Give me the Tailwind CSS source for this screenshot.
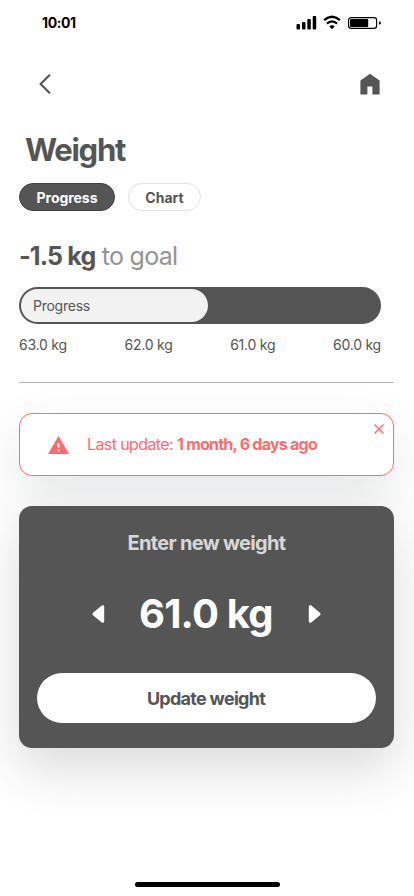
<!DOCTYPE html>
<html lang="en">
<head>
<meta charset="utf-8">
<meta name="viewport" content="width=device-width, initial-scale=1">
<title>Weight</title>
<script src="https://cdn.jsdelivr.net/npm/@tailwindcss/browser@4"></script>
</head>
<body class="bg-white">
<div class="w-[414px] h-[896px] overflow-hidden flex flex-col bg-white font-[Inter,sans-serif] text-[#555555]">
  <!-- Status bar -->
  <header class="h-[46px] shrink-0 flex items-center justify-between pl-[42px] pr-[33px] text-black">
    <span class="text-[14px] leading-5 font-bold tracking-[-0.4px]">10:01</span>
    <svg class="w-[86px] h-[16px]" viewBox="0 0 86 16" fill="none">
      <g fill="#000">
        <rect x="1.5" y="9" width="3.5" height="5.5" rx="1"/>
        <rect x="7" y="7" width="3.5" height="7.5" rx="1"/>
        <rect x="12.3" y="4" width="3.5" height="10.5" rx="1"/>
        <rect x="17.7" y="1" width="3.5" height="13.5" rx="1"/>
      </g>
      <path d="M29 5.2Q37 -1.6 45 5.2" stroke="#000" stroke-width="2.3"/>
      <path d="M31.9 8.6Q37 4.2 42.1 8.6" stroke="#000" stroke-width="2.2"/>
      <path d="M37 14.2L34.2 11.3Q37 9.1 39.8 11.3Z" fill="#000"/>
      <rect x="53.6" y="2.6" width="28" height="10.8" rx="2.6" stroke="#000" stroke-width="1.2"/>
      <rect x="55" y="4" width="18.2" height="8" rx="1" fill="#000"/>
      <path d="M84 6.2Q86 6.8 86 8T84 9.8Z" fill="#000"/>
    </svg>
  </header>

  <!-- Navigation -->
  <nav class="h-[76px] shrink-0 flex items-center justify-between pl-[37px] pr-[34px]">
    <svg class="w-[16px] h-[22px]" viewBox="0 0 16 22" fill="none"><path d="M12.4 2.3L3.6 11L12.4 19.7" stroke="#555" stroke-width="2.2" stroke-linecap="round" stroke-linejoin="round"/></svg>
    <svg class="w-[20px] h-[22px]" viewBox="0 0 20 22"><path d="M10 .8L.8 7.2Q.4 7.5 .4 8V21.2Q.4 21.6 .8 21.6H7.4V13.6H12.4V21.6H19.2Q19.6 21.6 19.6 21.2V8Q19.6 7.5 19.2 7.2Z" fill="#555"/></svg>
  </nav>

  <main class="pl-[19px] pr-[20px]">
    <h1 class="h-[61px] pt-[9px] pl-[6px] text-[31px] leading-[37px] font-bold tracking-[-1.3px]">Weight</h1>

    <div class="flex gap-[13px]">
      <button class="w-[96px] h-[28px] rounded-full bg-[#555555] border border-[#404040] text-white text-[14px] leading-5 font-bold tracking-[-0.05px] pt-px">Progress</button>
      <button class="w-[73px] h-[28px] rounded-full bg-white border border-[#e2e2e2] text-[14px] leading-5 font-bold pt-px">Chart</button>
    </div>

    <p class="mt-[29px] h-[32px] text-[25px] leading-[32px] tracking-[-0.7px] text-[#949494] whitespace-nowrap"><span class="font-bold text-[#555555] tracking-[-0.85px]">-1.5 kg</span> to goal</p>

    <div class="mt-[15px] w-[362px] h-[37px] rounded-full bg-[#555555] p-[2px]">
      <div class="w-[187px] h-[33px] rounded-full bg-[#f2f2f2] pl-[12px] flex items-center text-[14px] tracking-[-0.25px]">Progress</div>
    </div>

    <div class="mt-[11px] w-[362px] flex justify-between text-[14px] leading-5 tracking-[-0.22px]">
      <span>63.0 kg</span><span>62.0 kg</span><span>61.0 kg</span><span>60.0 kg</span>
    </div>

    <div class="mt-[27px] h-px bg-[#b3b3b3]"></div>

    <section class="relative mt-[30px] h-[63px] rounded-[13px] border border-[#ff6b6d] bg-white flex items-center pl-[28px] text-[#ff6b6d] shadow-[0_20px_50px_rgba(50,60,70,0.13)]">
      <svg class="w-[21px] h-[18px]" viewBox="0 0 21 18"><path d="M10.5 0L21 18H0Z" fill="#ff6b6d"/><path d="M9.6 7h1.8v4.4H9.6zM9.6 13.4h1.8v1.9H9.6z" fill="#fff"/></svg>
      <p class="ml-[18px] -mt-[2px] text-[16px] leading-6 tracking-[-0.6px] whitespace-nowrap">Last update: <b class="font-bold tracking-[-0.76px]">1 month, 6 days ago</b></p>
      <svg class="absolute right-[9px] top-[10px] w-[10px] h-[10px]" viewBox="0 0 10 10"><path d="M.5 .5L9.5 9.5M9.5 .5L.5 9.5" stroke="#ff6b6d" stroke-width="1.5"/></svg>
    </section>

    <section class="relative mt-[30px] h-[242px] rounded-[13px] bg-[#555555] px-[18px] flex flex-col shadow-[0_20px_50px_rgba(50,50,50,0.18)]">
      <h2 class="mt-[23px] text-center text-[20px] leading-7 font-bold tracking-[-0.68px] text-[#d9d7d7]">Enter new weight</h2>
      <div class="mt-[32px] h-[50px] flex items-center justify-center gap-[34px]">
        <svg class="w-[13px] h-[18px]" viewBox="0 0 13 18"><path d="M10.7 1.7V16.3L2 9Z" fill="#fff" stroke="#fff" stroke-width="3" stroke-linejoin="round"/></svg>
        <span class="w-[135px] text-[40px] leading-[50px] font-bold tracking-[-0.8px] text-white whitespace-nowrap">61.0 kg</span>
        <svg class="w-[13px] h-[18px]" viewBox="0 0 13 18"><path d="M2.3 1.7V16.3L11 9Z" fill="#fff" stroke="#fff" stroke-width="3" stroke-linejoin="round"/></svg>
      </div>
      <button class="mt-[34px] h-[50px] w-[339px] rounded-full bg-white text-[18px] leading-6 font-bold tracking-[-0.72px] pt-[2px] pr-[1px]">Update weight</button>
    </section>
  </main>

  <div class="mt-auto mb-[9px] mx-auto w-[145px] h-[5px] shrink-0 rounded-full bg-black"></div>
</div>
</body>
</html>
